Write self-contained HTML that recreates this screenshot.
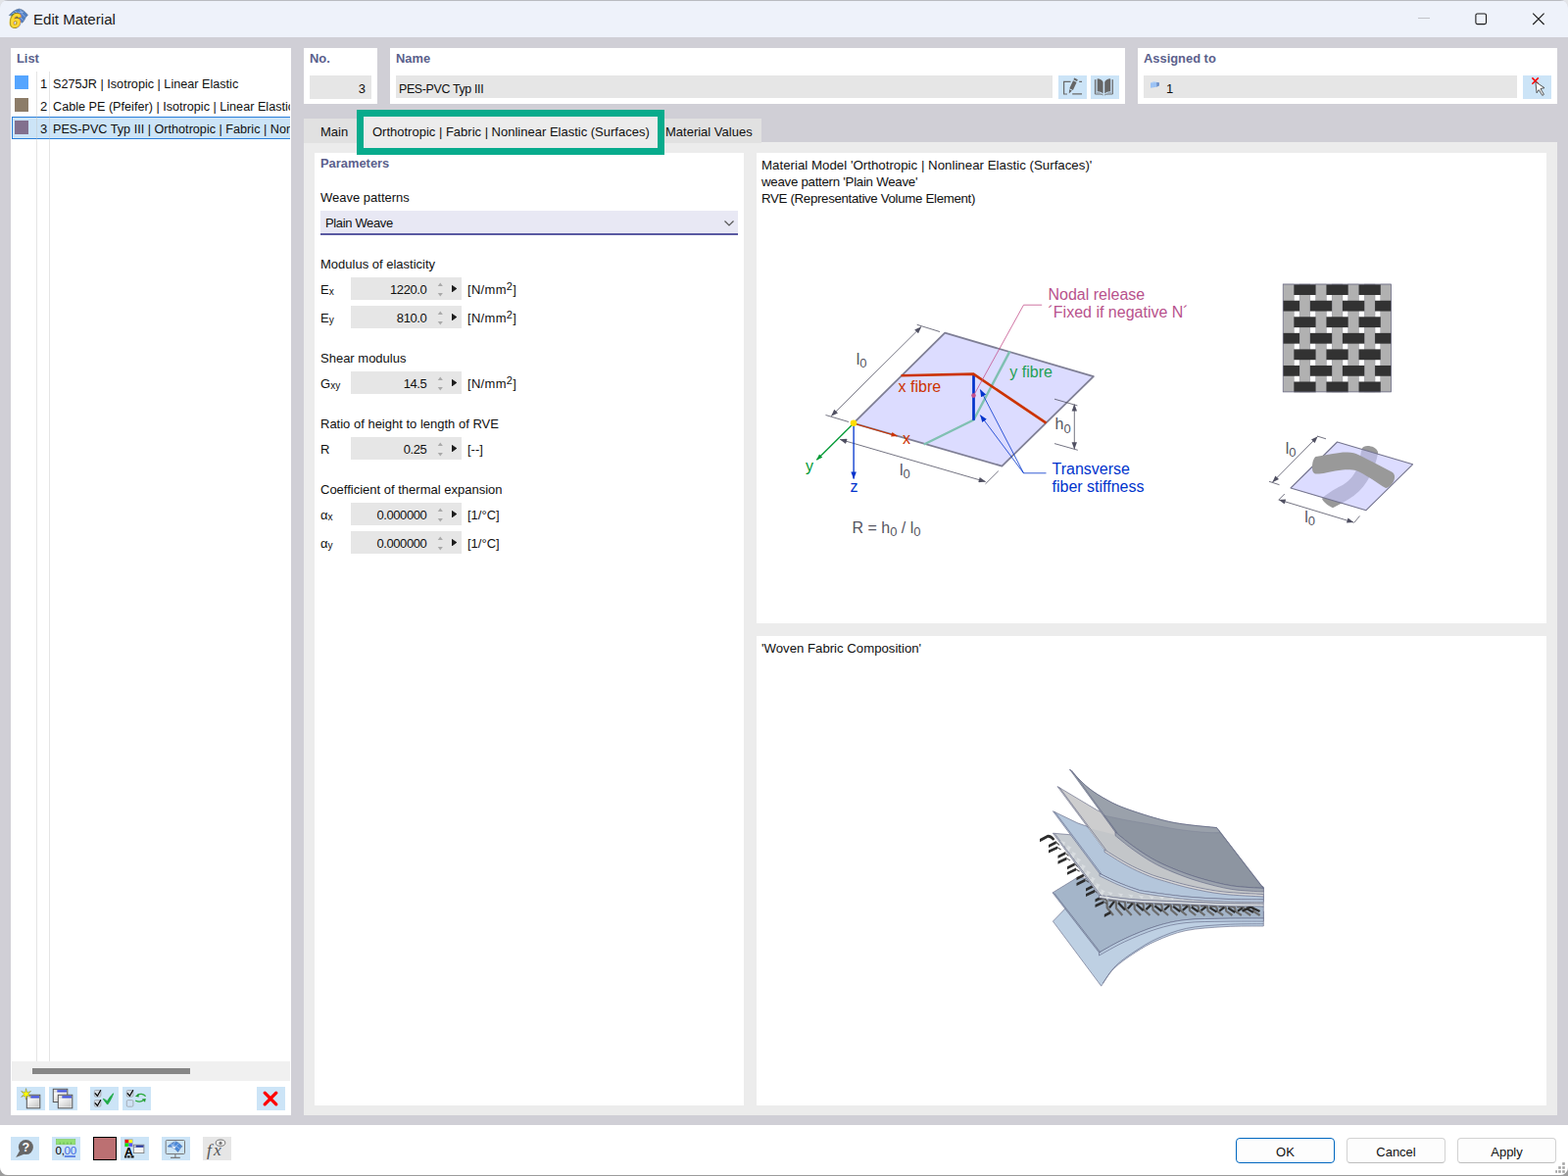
<!DOCTYPE html>
<html lang="en">
<head>
<meta charset="utf-8">
<title>Edit Material</title>
<style>
*{box-sizing:border-box;margin:0;padding:0}
html,body{width:1600px;height:1200px;overflow:hidden;background:linear-gradient(#e2e4e8 0,#e2e4e8 600px,#9c9c9c 600px)}
body{font-family:"Liberation Sans",sans-serif;font-size:13px;color:#111;position:relative}
.abs,.t,.b,.p,.in,.btn{position:absolute}
.t{line-height:16px;white-space:nowrap;font-size:13px;color:#101010}
.b{font-weight:bold;color:#5b5f8c;font-size:12.9px}
#params .t{margin-top:1px}
#params .t.b{margin-top:0}
#params .sp .v{margin-top:1px}
.tab .t{margin-top:1px}
#list .row{font-size:12.65px}
.p{background:#fff}
.in{background:#e6e6e6}
.btn{background:#cce4f7;width:29px;height:24px}
.sub{font-size:10px;position:relative;top:0.6px}
sup{font-size:11px;line-height:0;position:relative;top:1.5px;vertical-align:super}
#win{position:absolute;left:0;top:0;width:1600px;height:1199px;background:#d0cfd6;border-radius:8px;overflow:hidden}
#title{position:absolute;left:0;top:0;width:1600px;height:38px;background:#eef2fa;box-shadow:inset 0 1px 0 #b9bbc0}
#bottom{position:absolute;left:0;top:1148px;width:1600px;height:51px;background:#fff}
.tab{position:absolute;top:121px;height:25px;background:#e1e1e1;z-index:2}
.pb{position:absolute;height:26px;width:101px;border:1px solid #d2d2d2;border-bottom-color:#bdbdbd;border-radius:4px;background:#fdfdfd;text-align:center;line-height:27px;font-size:13px}
.sp{position:absolute;width:113px;height:23px;background:#e6e6e6}
.sp .v{position:absolute;right:35.6px;top:4px;line-height:16px;font-size:13px;letter-spacing:-0.4px}
.sp .u,.sp .d{position:absolute;left:88.4px;width:5.8px;height:4px;background:#a9a9a9}
.sp .u{top:5.4px;clip-path:polygon(50% 0,100% 100%,0 100%)}
.sp .d{top:15.6px;clip-path:polygon(0 0,100% 0,50% 100%)}
.sp .r{position:absolute;left:103px;top:7.7px;width:5.4px;height:7.8px;background:#1e1e1e;clip-path:polygon(0 0,100% 50%,0 100%)}
</style>
</head>
<body>
<svg width="0" height="0" style="position:absolute"><defs><linearGradient id="wg" x1="0" y1="0" x2="1" y2="1"><stop offset="0" stop-color="#fff"/><stop offset="1" stop-color="#c4c4c4"/></linearGradient></defs></svg>
<div id="win">
<!-- TITLE BAR -->
<div id="title">
  <div class="t" style="left:34px;top:11px;font-size:15.1px;line-height:18px;color:#1a1a1a">Edit Material</div>
  <svg class="abs" style="left:6px;top:5px" width="28" height="28" viewBox="6 5 28 28">
<path d="M9.3 15.6 C11.5 13 15 10 19.5 9.1 C22.5 9.4 26 12 28.4 15.4 L26.3 17.4 C25.5 19.5 24.3 21.6 22.8 23.2 L19.5 21.5 L15 16.5 Z" fill="#4f7fc4" stroke="#6a7f9c" stroke-width="0.8"/>
<path d="M12.5 13.8 L24 12.2 M15.5 11.2 L19 16 L23.5 20.5 M20.5 9.8 L22.5 14 L25.8 17.4" stroke="#9bb9e6" stroke-width="0.9" fill="none"/>
<g font-family="'Liberation Sans',sans-serif" font-weight="bold" font-style="italic" font-size="19.5"><text x="10" y="28" fill="#85731c" stroke="#85731c" stroke-width="1.9" stroke-linejoin="round">6</text><text x="10" y="28" fill="#fdd835" stroke="#fdd835" stroke-width="0.5" stroke-linejoin="round">6</text></g>
</svg>
  <svg class="abs" style="left:1440px;top:8px" width="150" height="24" viewBox="1440 8 150 24" fill="none">
<path d="M1447 18.5 H1459" stroke="#c2c4c9" stroke-width="1"/>
<rect x="1505.9" y="14" width="10.6" height="10.6" rx="1.6" stroke="#1b1b1b" stroke-width="1.1"/>
<path d="M1564.2 13.6 L1575.6 25 M1575.6 13.6 L1564.2 25" stroke="#1b1b1b" stroke-width="1.1"/>
</svg>
</div>

<!-- LIST PANEL -->
<div class="p" style="left:11px;top:49px;width:286px;height:1089px;overflow:hidden" id="list">
  <div class="t b" style="left:6px;top:3px">List</div>
  <div class="abs" style="left:0;top:0;width:285px;height:1034px;overflow:hidden"><div class="abs" style="left:1px;top:70px;width:290px;height:23px;background:#cce4f7;border:1px solid #2b7fd9;border-right:none"></div>
  <div class="abs" style="left:26px;top:24px;width:1px;height:1010px;background:rgba(190,190,190,0.4)"></div>
  <div class="abs" style="left:39px;top:24px;width:1px;height:1010px;background:rgba(190,190,190,0.4)"></div>
  <div class="abs" style="left:4px;top:28px;width:14px;height:14px;background:#55a5ff"></div>
  <div class="abs" style="left:4px;top:51px;width:14px;height:14px;background:#8c7c68"></div>
  <div class="abs" style="left:4px;top:74px;width:14px;height:14px;background:#82708e"></div>
  <div class="t" style="left:30px;top:29px">1</div><div class="t row" style="left:43px;top:29px">S275JR | Isotropic | Linear Elastic</div>
  <div class="t" style="left:30px;top:52px">2</div><div class="t row" style="left:43px;top:52px">Cable PE (Pfeifer) | Isotropic | Linear Elastic</div>
  <div class="t" style="left:30px;top:75px">3</div><div class="t row" style="left:43px;top:75px">PES-PVC Typ III | Orthotropic | Fabric | Nonlinear Elastic (Surfaces)</div>
  </div>
  <div class="abs" style="left:1px;top:1034px;width:284px;height:20px;background:#f0f0f0"></div>
  <div class="abs" style="left:22px;top:1041px;width:161px;height:6px;background:#868686"></div>
  <div class="btn" style="left:6px;top:1060px"><svg class="abs" style="left:0;top:0" width="29" height="24" viewBox="0 0 29 24"><rect x="10.3" y="8.3" width="13.5" height="13.5" fill="#e9e9e9" stroke="#555" stroke-width="1"/><rect x="14.3" y="9.200000000000001" width="8.7" height="2.3" fill="#4455dd"/><rect x="11.200000000000001" y="9.200000000000001" width="2.6" height="2.3" fill="#ddd"/><rect x="11.5" y="12.3" width="11.1" height="8.1" fill="url(#wg)"/><path d="M9.6 1.6 L10.6 5.7 L14.6 4.5 L11.6 7.4 L14.6 10.3 L10.6 9.1 L9.6 13.2 L8.6 9.1 L4.6 10.3 L7.6 7.4 L4.6 4.5 L8.6 5.7 Z" fill="#ffff00" stroke="#77774a" stroke-width="0.5"/></svg></div>
  <div class="btn" style="left:39px;top:1060px"><svg class="abs" style="left:0;top:0" width="29" height="24" viewBox="0 0 29 24"><rect x="4.3" y="2.3" width="14.5" height="13.2" fill="#e9e9e9" stroke="#555" stroke-width="1"/><rect x="8.3" y="3.1999999999999997" width="9.7" height="2.3" fill="#4455dd"/><rect x="5.2" y="3.1999999999999997" width="2.6" height="2.3" fill="#ddd"/><rect x="5.5" y="6.3" width="12.1" height="7.799999999999999" fill="url(#wg)"/><rect x="9.3" y="8.3" width="14.5" height="13.5" fill="#e9e9e9" stroke="#555" stroke-width="1"/><rect x="13.3" y="9.200000000000001" width="9.7" height="2.3" fill="#4455dd"/><rect x="10.200000000000001" y="9.200000000000001" width="2.6" height="2.3" fill="#ddd"/><rect x="10.5" y="12.3" width="12.1" height="8.1" fill="url(#wg)"/></svg></div>
  <div class="btn" style="left:81px;top:1060px"><svg class="abs" style="left:0;top:0" width="29" height="24" viewBox="0 0 29 24"><rect x="4.3" y="3.5" width="6.6" height="6.6" rx="1.2" fill="#d3dbe3" stroke="#9a9fa8" stroke-width="0.8"/><rect x="4.3" y="13.6" width="6.6" height="6.6" rx="1.2" fill="#d3dbe3" stroke="#9a9fa8" stroke-width="0.8"/><path d="M4.8 6.4 L7.4 9.2 L10.9 3.2" fill="none" stroke="#000" stroke-width="1.25"/><path d="M4.8 16.4 L7.4 19.2 L10.9 13.2" fill="none" stroke="#000" stroke-width="1.25"/><path d="M13.2 12.2 C14.8 12.6 16.3 13.6 17.4 14.8 C19 12 21 9.2 23.7 6.8 C22.3 10.6 20.3 14.8 17.7 18.1 C16.3 16.4 14.4 14 13.2 12.2 Z" fill="#1faa47" stroke="#1faa47" stroke-width="0.9" stroke-linejoin="round"/></svg></div>
  <div class="btn" style="left:114px;top:1060px"><svg class="abs" style="left:0;top:0" width="29" height="24" viewBox="0 0 29 24"><rect x="4.3" y="3.5" width="6.6" height="6.6" rx="1.2" fill="#d3dbe3" stroke="#9a9fa8" stroke-width="0.8"/><rect x="4.3" y="13.6" width="6.6" height="6.6" rx="1.2" fill="#cfe2f5" stroke="#9a9fa8" stroke-width="0.8"/><path d="M4.8 6.4 L7.4 9.2 L10.9 3.2" fill="none" stroke="#000" stroke-width="1.25"/><path d="M23.6 9.6 C21.5 7 17.5 6.6 15.2 8.4" fill="none" stroke="#2aaa3a" stroke-width="1.3"/><path d="M12.9 9.8 L16.6 6.8 L16.6 10.4 Z" fill="#1f9a30"/>
<path d="M13.2 14 C16 15.4 19.5 15.2 21.6 13.6" fill="none" stroke="#2aaa3a" stroke-width="1.3"/><path d="M23.8 12 L23 15.8 L19.8 12.6 Z" fill="#1f9a30"/></svg></div>
  <div class="btn" style="left:251px;top:1060px"><svg class="abs" style="left:0;top:0" width="29" height="24" viewBox="0 0 29 24"><path d="M8.2 6.2 L19.8 17.8 M19.8 6.2 L8.2 17.8" stroke="#f00" stroke-width="3.3" stroke-linecap="round"/></svg></div>
</div>

<!-- TOP PANELS -->
<div class="p" style="left:310px;top:49px;width:75px;height:57px">
  <div class="t b" style="left:6px;top:3px">No.</div>
  <div class="in" style="left:6px;top:28px;width:63px;height:24px"><div class="t" style="right:6px;top:6px">3</div></div>
</div>
<div class="p" style="left:398px;top:49px;width:750px;height:57px">
  <div class="t b" style="left:6px;top:3px">Name</div>
  <div class="in" style="left:6px;top:28px;width:670px;height:23px"><div class="t" style="left:3px;top:6px;font-size:12.4px;letter-spacing:-0.34px">PES-PVC Typ III</div></div>
  <div class="btn" style="left:682px;top:28px"><svg class="abs" style="left:0;top:0" width="29" height="24" viewBox="0 0 29 24">
<path d="M12.5 6.4 H5.6 V19 H9" fill="none" stroke="#6a6a6a" stroke-width="1.2"/>
<path d="M14.2 18.8 H24 M21.2 6.3 H24" fill="none" stroke="#6a6a6a" stroke-width="1.3"/>
<path d="M16.2 2.6 L19.8 4.3 L19 6 L15.4 4.3 Z M15 5.2 L18.6 6.9 L14.9 14.9 L11.3 13.2 Z M11.1 14.2 L13.9 15.5 L10.8 18.6 Z" fill="#666"/>
</svg></div>
  <div class="btn" style="left:715px;top:28px"><svg class="abs" style="left:0;top:0" width="29" height="24" viewBox="0 0 29 24">
<path d="M6.7 3.2 C9.5 3.2 11.6 4.6 12.6 6.8 V18.6 C11 17 9 16.3 6.7 16.3 Z M20.1 3.2 C17.3 3.2 15.2 4.6 14.2 6.8 V18.6 C15.8 17 17.8 16.3 20.1 16.3 Z" fill="#666"/>
<path d="M4.4 4.2 V19 H9.8 C11 19 12 19.4 12.6 20 M22.4 4.2 V19 H17 C15.8 19 14.8 19.4 14.2 20" fill="none" stroke="#6a6a6a" stroke-width="1"/>
<path d="M5.6 4 V17.6 H9.5 M21.2 4 V17.6 H17.3" fill="none" stroke="#8d97a3" stroke-width="0.7"/>
</svg></div>
</div>
<div class="p" style="left:1161px;top:49px;width:428px;height:57px">
  <div class="t b" style="left:6px;top:3px">Assigned to</div>
  <div class="in" style="left:6px;top:28px;width:381px;height:23px"><svg class="abs" style="left:6px;top:5px" width="12" height="9" viewBox="6 5 12 9">
<path d="M7 7.4 L10.2 6.1 L15.9 7.2 L13.2 7.2 Z" fill="#bcd6f7"/>
<path d="M7 7.4 L13.2 7.1 L13.2 11.8 L7 12.7 Z" fill="#9cc3f5"/>
<path d="M13.2 7.1 L15.9 7.2 L15.9 10.6 L13.2 11.8 Z" fill="#6b8fc9"/>
</svg><div class="t" style="left:23px;top:6px">1</div></div>
  <div class="btn" style="left:393px;top:28px"><svg class="abs" style="left:0;top:0" width="29" height="24" viewBox="0 0 29 24">
<path d="M9.4 2.4 L15.8 8.8 M15.8 2.4 L9.4 8.8" stroke="#f00" stroke-width="1.5"/>
<path d="M12.9 6.6 L22 12.7 L18 13.5 L21.4 19.4 L19.8 20.4 L16.3 14.6 L14.1 17.8 Z" fill="#fff" stroke="#444" stroke-width="0.9" stroke-linejoin="round"/>
</svg></div>
</div>

<!-- TABS -->
<div class="tab" style="left:310px;width:61px"><div class="t" style="left:17px;top:5px">Main</div></div>
<div class="tab" style="left:671px;width:106px"><div class="t" style="left:8px;top:5px">Material Values</div></div>
<div class="abs" style="left:310px;top:145px;width:1279px;height:993px;background:#ececec"></div>
<div class="abs" style="left:364px;top:112px;width:314px;height:46px;background:#ececec;border:7px solid #07ab8c;z-index:5"><div class="t" style="left:9px;top:8px">Orthotropic | Fabric | Nonlinear Elastic (Surfaces)</div></div>

<!-- PARAMETERS PANEL -->
<div class="p" style="left:321px;top:156px;width:438px;height:972px" id="params">
  <div class="t b" style="left:6px;top:3px">Parameters</div>
  <div class="t" style="left:6px;top:37px">Weave patterns</div>
  <div class="abs" style="left:6px;top:59px;width:426px;height:25px;background:#e8e8f4;border-bottom:2px solid #5a5aa2"><div class="t" style="left:5px;top:4px;letter-spacing:-0.35px">Plain Weave</div>
    <svg class="abs" style="left:410px;top:8px" width="14" height="10" viewBox="0 0 14 10"><path d="M2.5 2.5 L7 7 L11.5 2.5" fill="none" stroke="#555" stroke-width="1.2"/></svg></div>
  <div class="t" style="left:6px;top:105px">Modulus of elasticity</div>
  <div class="t" style="left:6px;top:131px">E<span class="sub">x</span></div><div class="sp" style="left:37px;top:127px"><div class="v">1220.0</div><div class="u"></div><div class="d"></div><div class="r"></div></div><div class="t" style="left:156px;top:131px"><span style="letter-spacing:0.3px">[N/mm<sup>2</sup>]</span></div>
  <div class="t" style="left:6px;top:160px">E<span class="sub">y</span></div><div class="sp" style="left:37px;top:156px"><div class="v">810.0</div><div class="u"></div><div class="d"></div><div class="r"></div></div><div class="t" style="left:156px;top:160px"><span style="letter-spacing:0.3px">[N/mm<sup>2</sup>]</span></div>
  <div class="t" style="left:6px;top:201px">Shear modulus</div>
  <div class="t" style="left:6px;top:227px">G<span class="sub">xy</span></div><div class="sp" style="left:37px;top:223px"><div class="v">14.5</div><div class="u"></div><div class="d"></div><div class="r"></div></div><div class="t" style="left:156px;top:227px"><span style="letter-spacing:0.3px">[N/mm<sup>2</sup>]</span></div>
  <div class="t" style="left:6px;top:268px">Ratio of height to length of RVE</div>
  <div class="t" style="left:6px;top:294px">R</div><div class="sp" style="left:37px;top:290px"><div class="v">0.25</div><div class="u"></div><div class="d"></div><div class="r"></div></div><div class="t" style="left:156px;top:294px">[--]</div>
  <div class="t" style="left:6px;top:335px">Coefficient of thermal expansion</div>
  <div class="t" style="left:6px;top:361px">α<span class="sub">x</span></div><div class="sp" style="left:37px;top:357px"><div class="v">0.000000</div><div class="u"></div><div class="d"></div><div class="r"></div></div><div class="t" style="left:156px;top:361px">[1/°C]</div>
  <div class="t" style="left:6px;top:390px">α<span class="sub">y</span></div><div class="sp" style="left:37px;top:386px"><div class="v">0.000000</div><div class="u"></div><div class="d"></div><div class="r"></div></div><div class="t" style="left:156px;top:390px">[1/°C]</div>
</div>

<!-- RIGHT TOP PANEL -->
<div class="p" style="left:772px;top:156px;width:806px;height:480px" id="rt">
  <div class="t" style="left:5px;top:4px;line-height:17px;font-size:13.3px">Material Model 'Orthotropic | Nonlinear Elastic (Surfaces)'<br><span style="letter-spacing:-0.28px">weave pattern 'Plain Weave'</span><br><span style="letter-spacing:-0.33px">RVE (Representative Volume Element)</span></div>
<!--DIAGRAM-START--><svg class="abs" style="left:0;top:0" width="806" height="480" viewBox="772 156 806 480" font-family="'Liberation Sans',sans-serif" font-size="16">
<defs>
<marker id="ag" viewBox="0 0 10 8" refX="9.5" refY="4" markerWidth="7.8" markerHeight="5.8" markerUnits="userSpaceOnUse" orient="auto-start-reverse"><path d="M0 0.3 L10 4 L0 7.7 Z" fill="#505062"/></marker>
<marker id="ab" viewBox="0 0 10 8" refX="9.5" refY="4" markerWidth="8" markerHeight="6" markerUnits="userSpaceOnUse" orient="auto"><path d="M0 0.3 L10 4 L0 7.7 Z" fill="#0033cc"/></marker>
<marker id="ar" viewBox="0 0 10 8" refX="9.5" refY="4" markerWidth="9" markerHeight="5" markerUnits="userSpaceOnUse" orient="auto"><path d="M0 0.3 L10 4 L0 7.7 Z" fill="#cc3300"/></marker>
<marker id="agr" viewBox="0 0 10 8" refX="9.5" refY="4" markerWidth="9" markerHeight="5" markerUnits="userSpaceOnUse" orient="auto"><path d="M0 0.3 L10 4 L0 7.7 Z" fill="#009933"/></marker>
<marker id="ag2" viewBox="0 0 10 8" refX="9.5" refY="4" markerWidth="7.5" markerHeight="5.5" markerUnits="userSpaceOnUse" orient="auto-start-reverse"><path d="M0 0.2 L10 4 L0 7.8 Z" fill="#505062"/></marker>
</defs>
<!-- main RVE plane -->
<path d="M870.9 431.8 L964.2 339.7 L1115.8 384.2 L1022.4 475.6 Z" fill="#dcdcff" stroke="#7f7f95" stroke-width="1.8" stroke-linejoin="round"/>
<!-- y fibre -->
<path d="M1030.4 358.6 L993.5 428.5 L942.8 453.5" fill="none" stroke="#80c0b2" stroke-width="2.4" stroke-linejoin="round"/>
<!-- vertical -->
<path d="M993.5 382 L993.5 428.8" stroke="#0033cc" stroke-width="2.7" fill="none"/>
<!-- x fibre -->
<path d="M919.6 383.2 L993.3 381.6 L1067.5 431.6" fill="none" stroke="#cc3300" stroke-width="2.6" stroke-linejoin="miter"/>
<!-- pink -->
<path d="M993.5 403.6 L1044.5 311.2 L1063.2 311.2" fill="none" stroke="#c4508c" stroke-width="0.8"/>
<circle cx="993.5" cy="403.6" r="2.3" fill="#c4508c"/>
<!-- dims -->
<g stroke="#505062" stroke-width="0.8" fill="none">
<path d="M935.7 331.3 L959 338.5 M842.5 423.5 L866 430.5"/>
<path d="M848.3 424.5 L940 333.5" marker-start="url(#ag)" marker-end="url(#ag)"/>
<path d="M1018.8 480.6 L1005.5 493.8"/>
<path d="M857.2 448.4 L1005.6 491.5" marker-start="url(#ag)" marker-end="url(#ag)"/>
<path d="M1076 407.2 L1099.4 413.9 M1076 452.6 L1099.8 459.3"/>
<path d="M1096.3 412.6 L1096.3 458.2" marker-start="url(#ag)" marker-end="url(#ag)"/>
</g>
<!-- blue leaders -->
<g stroke="#0033cc" stroke-width="0.8" fill="none">
<path d="M1067.5 482.8 L1044.5 482.8 L1000.3 397.6" marker-end="url(#ab)"/>
<path d="M1044.5 482.8 L1000.3 423.6" marker-end="url(#ab)"/>
</g>
<!-- axes -->
<path d="M871 432 L915.5 445" stroke="#cc3300" stroke-width="1.3" marker-end="url(#ar)"/>
<path d="M871 432 L833.4 469.2" stroke="#009933" stroke-width="1.3" marker-end="url(#agr)"/>
<path d="M871.1 432 L871.1 488.6" stroke="#0033cc" stroke-width="1.3" marker-end="url(#ab)"/>
<circle cx="871" cy="431.8" r="3.3" fill="#ffdd00"/>
<!-- texts -->
<g fill="#b8528c"><text x="1069.5" y="305.9">Nodal release</text><text x="1069.5" y="324">´Fixed if negative N´</text></g>
<text x="916.6" y="400.0" fill="#cc3300">x fibre</text>
<text x="1030.3" y="385.0" fill="#1fa055">y fibre</text>
<text x="921" y="452.7" fill="#cc3300">x</text>
<text x="822" y="481.4" fill="#009933">y</text>
<text x="867.4" y="502.4" fill="#0033cc">z</text>
<g fill="#0033cc"><text x="1073.5" y="484.1">Transverse</text><text x="1073.5" y="501.9">fiber stiffness</text></g>
<g fill="#55555f">
<text x="873.8" y="371.7">l<tspan font-size="13" dy="3.5">0</tspan></text>
<text x="918" y="484.6">l<tspan font-size="13" dy="3.5">0</tspan></text>
<text x="1076.5" y="438.4">h<tspan font-size="13" dy="3.5">0</tspan></text>
<text x="869.5" y="543.7">R = h<tspan font-size="13" dy="3.5">0</tspan><tspan dy="-3.5"> / l</tspan><tspan font-size="13" dy="3.5">0</tspan></text>
</g>
<g id="weave"><rect x="1309.2" y="290.0" width="110.4" height="109.9" fill="#fff"/>
<rect x="1309.50" y="290.0" width="10.8" height="109.9" fill="#b1b1b1" stroke="#8a8a94" stroke-width="0.4"/>
<rect x="1326.05" y="290.0" width="10.8" height="109.9" fill="#b1b1b1" stroke="#8a8a94" stroke-width="0.4"/>
<rect x="1342.60" y="290.0" width="10.8" height="109.9" fill="#b1b1b1" stroke="#8a8a94" stroke-width="0.4"/>
<rect x="1359.15" y="290.0" width="10.8" height="109.9" fill="#b1b1b1" stroke="#8a8a94" stroke-width="0.4"/>
<rect x="1375.70" y="290.0" width="10.8" height="109.9" fill="#b1b1b1" stroke="#8a8a94" stroke-width="0.4"/>
<rect x="1392.25" y="290.0" width="10.8" height="109.9" fill="#b1b1b1" stroke="#8a8a94" stroke-width="0.4"/>
<rect x="1408.80" y="290.0" width="10.8" height="109.9" fill="#b1b1b1" stroke="#8a8a94" stroke-width="0.4"/>
<rect x="1320.30" y="290.20" width="22.30" height="10.8" fill="#323232"/>
<rect x="1353.40" y="290.20" width="22.30" height="10.8" fill="#323232"/>
<rect x="1386.50" y="290.20" width="22.30" height="10.8" fill="#323232"/>
<rect x="1309.20" y="306.75" width="16.85" height="10.8" fill="#323232"/>
<rect x="1336.85" y="306.75" width="22.30" height="10.8" fill="#323232"/>
<rect x="1369.95" y="306.75" width="22.30" height="10.8" fill="#323232"/>
<rect x="1403.05" y="306.75" width="16.55" height="10.8" fill="#323232"/>
<rect x="1320.30" y="323.30" width="22.30" height="10.8" fill="#323232"/>
<rect x="1353.40" y="323.30" width="22.30" height="10.8" fill="#323232"/>
<rect x="1386.50" y="323.30" width="22.30" height="10.8" fill="#323232"/>
<rect x="1309.20" y="339.85" width="16.85" height="10.8" fill="#323232"/>
<rect x="1336.85" y="339.85" width="22.30" height="10.8" fill="#323232"/>
<rect x="1369.95" y="339.85" width="22.30" height="10.8" fill="#323232"/>
<rect x="1403.05" y="339.85" width="16.55" height="10.8" fill="#323232"/>
<rect x="1320.30" y="356.40" width="22.30" height="10.8" fill="#323232"/>
<rect x="1353.40" y="356.40" width="22.30" height="10.8" fill="#323232"/>
<rect x="1386.50" y="356.40" width="22.30" height="10.8" fill="#323232"/>
<rect x="1309.20" y="372.95" width="16.85" height="10.8" fill="#323232"/>
<rect x="1336.85" y="372.95" width="22.30" height="10.8" fill="#323232"/>
<rect x="1369.95" y="372.95" width="22.30" height="10.8" fill="#323232"/>
<rect x="1403.05" y="372.95" width="16.55" height="10.8" fill="#323232"/>
<rect x="1320.30" y="389.50" width="22.30" height="10.8" fill="#323232"/>
<rect x="1353.40" y="389.50" width="22.30" height="10.8" fill="#323232"/>
<rect x="1386.50" y="389.50" width="22.30" height="10.8" fill="#323232"/>
<rect x="1309.2" y="290.0" width="110.4" height="109.9" fill="none" stroke="#6c6c86" stroke-width="0.7"/></g>
<g id="rve2">
<path d="M1390 457.5 C1391 453.5 1404 454 1406.2 461.5 C1405 470 1401 481 1395 491 C1389 501 1380 508 1368 514 L1360 518.3 C1355 516 1350.5 512 1349 509 C1352 505 1360 500 1370 495 C1378 490 1383 483 1385 477 C1388 470 1388 463 1390 457 Z" fill="#999"/>
<path d="M1317 498 L1364.5 451 L1441.5 473.8 L1394 520.7 Z" fill="rgba(201,201,255,0.647)" stroke="#74748e" stroke-width="1.1" stroke-linejoin="round"/>
<path d="M1342.5 466 C1349 465 1354 464 1360 463 C1366 462 1370 461.3 1375 461.5 C1380 461.8 1383 462.5 1386 464 C1391 466.3 1395 468.5 1400 471 L1421 482 C1423.5 484 1423.5 487 1422.5 490 C1421 494 1418 497.5 1414 498 C1410 496 1405 492 1400 489 C1395 486 1392 484 1388 482 C1385 480.5 1383 479.7 1380 479.5 C1377 479.2 1373 479.2 1370 479.5 C1365 480 1360 481 1355 482 C1352 482.7 1349 483.2 1346 483.5 C1344 483.7 1342 483.6 1341 483 C1339.3 481.5 1339 479.5 1339 477 C1339 472.5 1340 468 1342.5 466 Z" fill="#999"/>
<g stroke="#505062" stroke-width="0.8" fill="none">
<path d="M1344 445 L1353 447.8 M1295 491.3 L1305.5 494.7"/>
<path d="M1298.6 491.9 L1344.4 445.6" marker-start="url(#ag2)" marker-end="url(#ag2)"/>
<path d="M1304.5 510.3 L1310.8 504 M1381.5 533.6 L1387.5 526.5"/>
<path d="M1305.2 510 L1381 533" marker-start="url(#ag2)" marker-end="url(#ag2)"/>
</g>
<g fill="#55555f">
<text x="1311.8" y="463.2">l<tspan font-size="13" dy="3">0</tspan></text>
<text x="1331.3" y="533.2">l<tspan font-size="13" dy="3">0</tspan></text>
</g>
</g>
</svg>
<!--DIAGRAM-END-->
</div>

<!-- RIGHT BOTTOM PANEL -->
<div class="p" style="left:772px;top:649px;width:806px;height:479px" id="rb">
  <div class="t" style="left:5px;top:5px;font-size:13.2px">'Woven Fabric Composition'</div>
<!--FABRIC-START--><svg class="abs" style="left:0;top:0" width="806" height="479" viewBox="772 649 806 479">
<g stroke="#5c6180" stroke-width="0.6" stroke-linejoin="round">
<path d="M1074.4 940.1 L1092 922 L1289.3 930 L1289.3 945 C1282.8 945.1 1263.2 944.8 1250.0 945.6 C1236.8 946.4 1221.7 947.2 1210.0 949.6 C1198.3 952.0 1188.6 956.3 1180.0 960.0 C1171.4 963.7 1165.5 967.3 1158.3 972.0 C1151.1 976.7 1142.5 982.6 1136.7 988.3 C1130.9 994.0 1125.9 1003.2 1123.7 1006.2 Z" fill="#bed0e3"/>
<path d="M1125.5 1003.0 C1127.7 1000.1 1132.8 991.1 1138.5 985.5 C1144.2 979.9 1152.9 974.1 1160.0 969.5 C1167.1 964.9 1172.6 961.3 1181.0 957.6 C1189.4 953.9 1199.0 949.8 1210.5 947.4 C1222.0 945.0 1236.9 944.2 1250.0 943.4 C1263.1 942.6 1282.8 942.8 1289.3 942.7" fill="none"/>
<path d="M1074.0 910.9 L1100 895 L1289.3 925 L1289.3 937.1 C1282.8 937.1 1263.2 937.0 1250.0 937.2 C1236.8 937.5 1221.7 937.3 1210.0 938.6 C1198.3 939.9 1190.4 941.8 1180.0 945.0 C1169.6 948.2 1157.2 953.5 1147.5 958.0 C1137.8 962.5 1125.8 969.7 1121.5 972.0 Z" fill="#a4b5c9"/>
<path d="M1121.5 972.0 C1125.8 969.7 1137.8 962.5 1147.5 958.0 C1157.2 953.5 1169.6 948.2 1180.0 945.0 C1190.4 941.8 1198.3 939.9 1210.0 938.6 C1221.7 937.3 1236.8 937.5 1250.0 937.2 C1263.2 937.0 1282.8 937.1 1289.3 937.1 L1289.3 940.1 C1282.8 940.1 1263.2 940.0 1250.0 940.2 C1236.8 940.5 1221.7 940.3 1210.0 941.6 C1198.3 942.9 1190.4 944.8 1180.0 948.0 C1169.6 951.2 1157.2 956.5 1147.5 961.0 C1137.8 965.5 1125.8 972.7 1121.5 975.0 Z" fill="#b9cbdf"/>
<path d="M1075.7 911.3 L1123.2 972.3" fill="none" stroke-width="0.6"/>
</g>
<g fill="none" stroke-linecap="butt" stroke-linejoin="round">
<path d="M1122.0 917.5 L1127.0 917.5 Q1129.5 917.7 1129.5 919.9 L1129.7 926.3 L1136.0 934.0" stroke="#6b6b6b" stroke-width="2.2"/>
<path d="M1131.3 918.6 L1136.3 918.6 Q1138.8 918.8 1138.8 921.0 L1139.0 926.8 L1145.3 934.0" stroke="#6b6b6b" stroke-width="2.2"/>
<path d="M1140.7 919.7 L1145.7 919.7 Q1148.2 919.9 1148.2 922.1 L1148.4 927.3 L1154.7 934.0" stroke="#6b6b6b" stroke-width="2.2"/>
<path d="M1150.0 920.8 L1155.0 920.8 Q1157.5 921.0 1157.5 923.2 L1157.8 927.8 L1164.0 934.0" stroke="#6b6b6b" stroke-width="2.2"/>
<path d="M1159.4 921.7 L1164.4 921.7 Q1166.9 921.9 1166.9 924.1 L1167.1 928.2 L1173.4 934.0" stroke="#6b6b6b" stroke-width="2.2"/>
<path d="M1168.8 922.1 L1173.8 922.1 Q1176.2 922.3 1176.2 924.5 L1176.5 928.4 L1182.8 934.0" stroke="#6b6b6b" stroke-width="2.2"/>
<path d="M1178.1 922.4 L1183.1 922.4 Q1185.6 922.6 1185.6 924.8 L1185.8 928.5 L1192.1 934.0" stroke="#6b6b6b" stroke-width="2.2"/>
<path d="M1187.5 922.8 L1192.5 922.8 Q1195.0 923.0 1195.0 925.2 L1195.2 928.7 L1201.5 934.0" stroke="#6b6b6b" stroke-width="2.2"/>
<path d="M1196.8 923.2 L1201.8 923.2 Q1204.3 923.4 1204.3 925.6 L1204.5 928.9 L1210.8 934.0" stroke="#6b6b6b" stroke-width="2.2"/>
<path d="M1206.2 923.6 L1211.2 923.6 Q1213.7 923.8 1213.7 926.0 L1213.9 929.1 L1220.2 934.0" stroke="#6b6b6b" stroke-width="2.2"/>
<path d="M1215.5 924.0 L1220.5 924.0 Q1223.0 924.2 1223.0 926.4 L1223.2 929.2 L1229.5 934.0" stroke="#6b6b6b" stroke-width="2.2"/>
<path d="M1224.8 924.4 L1229.8 924.4 Q1232.3 924.6 1232.3 926.8 L1232.5 929.4 L1238.8 934.0" stroke="#6b6b6b" stroke-width="2.2"/>
<path d="M1234.2 924.8 L1239.2 924.8 Q1241.7 925.0 1241.7 927.2 L1241.9 929.6 L1248.2 934.0" stroke="#6b6b6b" stroke-width="2.2"/>
<path d="M1243.5 925.1 L1248.5 925.1 Q1251.0 925.3 1251.0 927.5 L1251.2 929.7 L1257.5 934.0" stroke="#6b6b6b" stroke-width="2.2"/>
<path d="M1252.9 925.4 L1257.9 925.4 Q1260.4 925.6 1260.4 927.8 L1260.6 929.8 L1266.9 934.0" stroke="#6b6b6b" stroke-width="2.2"/>
<path d="M1262.2 925.5 L1267.2 925.5 Q1269.8 925.7 1269.8 927.9 L1270.0 929.9 L1276.2 934.0" stroke="#6b6b6b" stroke-width="2.2"/>
<path d="M1271.6 925.6 L1276.6 925.6 Q1279.1 925.8 1279.1 928.0 L1279.3 930.0 L1285.6 934.0" stroke="#6b6b6b" stroke-width="2.2"/>
<path d="M1132.0 926.3 L1137.0 919.9" stroke="#2b2b2b" stroke-width="2.3"/>
<path d="M1141.0 921.1 L1148.0 928.5" stroke="#2b2b2b" stroke-width="2.3"/>
<path d="M1150.7 927.3 L1155.7 921.8" stroke="#2b2b2b" stroke-width="2.3"/>
<path d="M1159.7 922.8 L1166.7 929.2" stroke="#2b2b2b" stroke-width="2.3"/>
<path d="M1169.4 928.2 L1174.4 923.4" stroke="#2b2b2b" stroke-width="2.3"/>
<path d="M1178.4 924.3 L1185.4 929.9" stroke="#2b2b2b" stroke-width="2.3"/>
<path d="M1188.1 928.5 L1193.1 924.0" stroke="#2b2b2b" stroke-width="2.3"/>
<path d="M1197.1 924.9 L1204.1 930.1" stroke="#2b2b2b" stroke-width="2.3"/>
<path d="M1206.8 928.9 L1211.8 924.7" stroke="#2b2b2b" stroke-width="2.3"/>
<path d="M1215.8 925.5 L1222.8 930.4" stroke="#2b2b2b" stroke-width="2.3"/>
<path d="M1225.5 929.2 L1230.5 925.3" stroke="#2b2b2b" stroke-width="2.3"/>
<path d="M1234.5 926.1 L1241.5 930.6" stroke="#2b2b2b" stroke-width="2.3"/>
<path d="M1244.2 929.6 L1249.2 925.9" stroke="#2b2b2b" stroke-width="2.3"/>
<path d="M1253.2 926.6 L1260.2 930.9" stroke="#2b2b2b" stroke-width="2.3"/>
<path d="M1262.9 929.8 L1267.9 926.4" stroke="#2b2b2b" stroke-width="2.3"/>
<path d="M1271.9 927.1 L1278.9 931.0" stroke="#2b2b2b" stroke-width="2.3"/>
<path d="M1267.5 929.8 L1276 925.5 L1285.5 930" stroke="#2b2b2b" stroke-width="2.4"/>
</g><g fill="#2d2d2d" stroke="none">
<path d="M1061 856 L1068.6 851.9 Q1072.5 851.2 1076.4 856.2 L1074.6 857.8 Q1071.8 854.6 1069.4 854.8 L1061 859.2 Z"/>
<path d="M1070.0 862.0 L1077.8 858.0 L1077.8 861.0 L1070.0 865.0 Z"/>
<path d="M1070.0 867.6 L1079.0 863.4 L1079.0 866.3 L1070.0 870.6 Z"/>
<path d="M1079.5 873.1 L1087.3 869.1 L1087.3 872.1 L1079.5 876.1 Z"/>
<path d="M1079.5 878.8 L1088.5 874.5 L1088.5 877.4 L1079.5 881.7 Z"/>
<path d="M1089.0 884.2 L1096.8 880.2 L1096.8 883.2 L1089.0 887.2 Z"/>
<path d="M1089.0 889.9 L1098.0 885.6 L1098.0 888.5 L1089.0 892.8 Z"/>
<path d="M1098.5 895.3 L1106.3 891.3 L1106.3 894.2 L1098.5 898.2 Z"/>
<path d="M1098.5 900.9 L1107.5 896.6 L1107.5 899.6 L1098.5 903.9 Z"/>
<path d="M1108.0 906.4 L1115.8 902.4 L1115.8 905.4 L1108.0 909.4 Z"/>
<path d="M1108.0 912.0 L1117.0 907.8 L1117.0 910.7 L1108.0 915.0 Z"/>
<path d="M1117.5 917.5 L1125.3 913.5 L1125.3 916.5 L1117.5 920.5 Z"/>
<path d="M1117.5 923.1 L1126.5 918.9 L1126.5 921.8 L1117.5 926.1 Z"/>
<path d="M1126.8 933.1 L1133.3 929.5 L1133.3 932.5 L1126.8 936.1 Z"/>
</g>
<g stroke="#555" stroke-width="1.1" fill="none">
<path d="M1077.8 859.5 l3.2 2.8 M1079.0 864.8 l3.6 2.2"/>
<path d="M1087.3 870.6 l3.2 2.8 M1088.5 875.9 l3.6 2.2"/>
<path d="M1096.8 881.7 l3.2 2.8 M1098.0 887.0 l3.6 2.2"/>
<path d="M1106.3 892.8 l3.2 2.8 M1107.5 898.1 l3.6 2.2"/>
<path d="M1115.8 903.9 l3.2 2.8 M1117.0 909.2 l3.6 2.2"/>
<path d="M1125.3 915.0 l3.2 2.8 M1126.5 920.3 l3.6 2.2"/>
</g>
<g stroke="#5c6180" stroke-width="0.6" stroke-linejoin="round">
<path d="M1074.4 850.2 L1095 852 L1289.3 915 L1289.3 922.3 C1282.8 922.2 1263.2 922.1 1250.0 921.8 C1236.8 921.4 1225.3 920.8 1210.0 920.2 C1194.7 919.6 1173.0 919.1 1158.3 918.0 C1143.5 916.9 1127.6 914.3 1121.5 913.6 Z" fill="#c7ccd1"/>
<path d="M1121.5 913.6 C1127.6 914.3 1143.5 916.9 1158.3 918.0 C1173.0 919.1 1194.7 919.6 1210.0 920.2 C1225.3 920.8 1236.8 921.4 1250.0 921.8 C1263.2 922.1 1282.8 922.2 1289.3 922.3 L1289.3 924.9 C1282.8 924.8 1263.2 924.8 1250.0 924.4 C1236.8 924.0 1225.3 923.4 1210.0 922.8 C1194.7 922.2 1173.0 921.7 1158.3 920.6 C1143.5 919.5 1127.6 916.9 1121.5 916.2 Z" fill="#d9dde0"/>
<path d="M1076.2 850.5 L1123.3 913.9" fill="none" stroke-width="0.6"/>
</g>
<g fill="#dfe3e6" opacity="0.75">
<path d="M1082.0 858.0 l5 1.2 l-1.2 4 Z"/>
<path d="M1089.0 862.5 l4.5 2.2 l-3.4 2.4 Z"/>
<path d="M1086.9 864.4 l5 1.2 l-1.2 4 Z"/>
<path d="M1093.9 868.9 l4.5 2.2 l-3.4 2.4 Z"/>
<path d="M1091.8 870.8 l5 1.2 l-1.2 4 Z"/>
<path d="M1098.8 875.3 l4.5 2.2 l-3.4 2.4 Z"/>
<path d="M1096.7 877.2 l5 1.2 l-1.2 4 Z"/>
<path d="M1103.7 881.7 l4.5 2.2 l-3.4 2.4 Z"/>
<path d="M1101.6 883.6 l5 1.2 l-1.2 4 Z"/>
<path d="M1108.6 888.1 l4.5 2.2 l-3.4 2.4 Z"/>
<path d="M1106.5 890.0 l5 1.2 l-1.2 4 Z"/>
<path d="M1113.5 894.5 l4.5 2.2 l-3.4 2.4 Z"/>
<path d="M1111.4 896.4 l5 1.2 l-1.2 4 Z"/>
<path d="M1118.4 900.9 l4.5 2.2 l-3.4 2.4 Z"/>
<path d="M1116.3 902.8 l5 1.2 l-1.2 4 Z"/>
<path d="M1123.3 907.3 l4.5 2.2 l-3.4 2.4 Z"/>
<path d="M1121.2 909.2 l5 1.2 l-1.2 4 Z"/>
<path d="M1128.2 913.7 l4.5 2.2 l-3.4 2.4 Z"/>
<path d="M1130.0 910.1 l5.5 0.8 l-2 2.8 Z"/>
<path d="M1140.5 911.4 l5.5 0.8 l-2 2.8 Z"/>
<path d="M1151.0 912.6 l5.5 0.8 l-2 2.8 Z"/>
<path d="M1161.5 913.6 l5.5 0.8 l-2 2.8 Z"/>
<path d="M1172.0 914.1 l5.5 0.8 l-2 2.8 Z"/>
<path d="M1182.5 914.5 l5.5 0.8 l-2 2.8 Z"/>
<path d="M1193.0 915.0 l5.5 0.8 l-2 2.8 Z"/>
<path d="M1203.5 915.4 l5.5 0.8 l-2 2.8 Z"/>
<path d="M1214.0 915.9 l5.5 0.8 l-2 2.8 Z"/>
<path d="M1224.5 916.3 l5.5 0.8 l-2 2.8 Z"/>
<path d="M1235.0 916.7 l5.5 0.8 l-2 2.8 Z"/>
<path d="M1245.5 917.1 l5.5 0.8 l-2 2.8 Z"/>
<path d="M1256.0 917.4 l5.5 0.8 l-2 2.8 Z"/>
<path d="M1266.5 917.5 l5.5 0.8 l-2 2.8 Z"/>
<path d="M1277.0 917.6 l5.5 0.8 l-2 2.8 Z"/>
</g>
<g stroke="#5c6180" stroke-width="0.6" stroke-linejoin="round">
<path d="M1074.4 827.7 L1100 840 L1289.3 905 L1289.3 918 C1282.8 917.9 1263.2 917.9 1250.0 917.4 C1236.8 916.9 1223.3 916.3 1210.0 915.0 C1196.7 913.7 1178.6 911.1 1170.0 909.8 C1161.4 908.5 1163.3 908.6 1158.3 907.0 C1153.3 905.4 1146.0 902.6 1140.0 900.0 C1134.0 897.4 1125.0 892.8 1122.0 891.4 Z" fill="#b4c6db"/>
<path d="M1122.0 891.4 C1125.0 892.8 1134.0 897.4 1140.0 900.0 C1146.0 902.6 1153.3 905.4 1158.3 907.0 C1163.3 908.6 1161.4 908.5 1170.0 909.8 C1178.6 911.1 1196.7 913.7 1210.0 915.0 C1223.3 916.3 1236.8 916.9 1250.0 917.4 C1263.2 917.9 1282.8 917.9 1289.3 918.0 L1289.3 920.4 C1282.8 920.3 1263.2 920.3 1250.0 919.8 C1236.8 919.3 1223.3 918.7 1210.0 917.4 C1196.7 916.1 1178.6 913.5 1170.0 912.2 C1161.4 910.9 1163.3 911.0 1158.3 909.4 C1153.3 907.8 1146.0 905.0 1140.0 902.4 C1134.0 899.8 1125.0 895.2 1122.0 893.8 Z" fill="#c3d3e6"/>
<path d="M1076.2 828.2 L1123.9 891.8" fill="none" stroke-width="0.6"/>
<path d="M1079.0 802.5 L1120 827 L1240 880 L1289.3 910 L1289.3 912.6 C1282.4 912.1 1260.4 911.3 1248.0 909.9 C1235.6 908.5 1225.4 906.3 1215.0 904.0 C1204.6 901.7 1193.3 898.2 1185.8 896.0 C1178.3 893.8 1176.0 893.0 1170.0 890.5 C1164.0 888.0 1157.2 884.9 1150.0 881.0 C1142.8 877.1 1130.8 869.3 1127.0 867.0 Z" fill="#cdcdce"/>
<path d="M1110.5 845 L1135 851 L1200 886 L1289.3 908 L1289.3 912.6 C1282.4 912.1 1260.4 911.3 1248.0 909.9 C1235.6 908.5 1225.4 906.3 1215.0 904.0 C1204.6 901.7 1193.3 898.2 1185.8 896.0 C1178.3 893.8 1176.0 893.0 1170.0 890.5 C1164.0 888.0 1157.2 884.9 1150.0 881.0 C1142.8 877.1 1130.8 869.3 1127.0 867.0 Z" fill="#c3c6c9" stroke="none"/>
<path d="M1127.0 867.0 C1130.8 869.3 1142.8 877.1 1150.0 881.0 C1157.2 884.9 1164.0 888.0 1170.0 890.5 C1176.0 893.0 1178.3 893.8 1185.8 896.0 C1193.3 898.2 1204.6 901.7 1215.0 904.0 C1225.4 906.3 1235.6 908.5 1248.0 909.9 C1260.4 911.3 1282.4 912.1 1289.3 912.6 L1289.3 915 C1282.4 914.5 1260.4 913.7 1248.0 912.3 C1235.6 910.9 1225.4 908.7 1215.0 906.4 C1204.6 904.1 1193.3 900.6 1185.8 898.4 C1178.3 896.1 1176.0 895.4 1170.0 892.9 C1164.0 890.4 1157.2 887.3 1150.0 883.4 C1142.8 879.5 1130.8 871.7 1127.0 869.4 Z" fill="#d8d8d9"/>
<path d="M1080.9 803.3 L1128.9 867.6" fill="none" stroke-width="0.6"/>
<path d="M1091.5 785.0 C1094.6 788.1 1103.6 798.2 1110.0 803.5 C1116.4 808.8 1123.3 812.8 1130.0 816.5 C1136.7 820.2 1140.7 822.1 1150.0 825.5 C1159.3 828.9 1175.8 834.1 1185.8 836.7 C1195.8 839.3 1200.7 840.0 1210.0 841.3 C1219.3 842.6 1236.2 844.0 1241.5 844.6 L1289.3 906.4 C1283.9 906.0 1267.5 905.5 1256.7 903.8 C1245.9 902.1 1234.2 898.9 1224.2 896.0 C1214.2 893.1 1205.1 889.6 1197.0 886.3 C1188.9 883.0 1182.4 880.0 1175.4 876.0 C1168.4 872.0 1161.2 867.0 1155.0 862.5 C1148.8 858.0 1140.8 851.2 1138.0 849.0 Z" fill="#8d95a1"/>
<path d="M1091.5 785.0 C1094.6 788.1 1103.6 798.2 1110.0 803.5 C1116.4 808.8 1123.3 812.8 1130.0 816.5 C1136.7 820.2 1140.7 822.1 1150.0 825.5 C1159.3 828.9 1175.8 834.1 1185.8 836.7 C1195.8 839.3 1200.7 840.0 1210.0 841.3 C1219.3 842.6 1236.2 844.0 1241.5 844.6 L1244.5 848.5 C1241.2 849.8 1232.4 849.7 1225.0 849.0 C1217.6 848.3 1209.2 847.4 1200.0 846.0 C1190.8 844.6 1178.3 842.0 1170.0 840.5 C1161.7 839.0 1157.3 838.4 1150.0 837.0 C1142.7 835.6 1130.0 832.8 1126.0 832.0 Z" fill="#9aa1ab" stroke="none"/>
<path d="M1126.0 832.0 C1130.0 832.8 1142.7 835.6 1150.0 837.0 C1157.3 838.4 1161.7 839.0 1170.0 840.5 C1178.3 842.0 1190.8 844.6 1200.0 846.0 C1209.2 847.4 1217.6 848.3 1225.0 849.0 C1232.4 849.7 1241.2 849.8 1244.5 850.0" fill="none" stroke="#7c8296" stroke-width="0.5"/>
<path d="M1091.5 785.0 C1094.6 788.1 1103.6 798.2 1110.0 803.5 C1116.4 808.8 1123.3 812.8 1130.0 816.5 C1136.7 820.2 1140.7 822.1 1150.0 825.5 C1159.3 828.9 1175.8 834.1 1185.8 836.7 C1195.8 839.3 1200.7 840.0 1210.0 841.3 C1219.3 842.6 1236.2 844.0 1241.5 844.6 L1289.3 906.4" fill="none"/>
<path d="M1138.0 849.0 C1140.8 851.2 1148.8 858.0 1155.0 862.5 C1161.2 867.0 1168.4 872.0 1175.4 876.0 C1182.4 880.0 1188.9 883.0 1197.0 886.3 C1205.1 889.6 1214.2 893.1 1224.2 896.0 C1234.2 898.9 1245.9 902.1 1256.7 903.8 C1267.5 905.5 1283.9 906.0 1289.3 906.4 L1289.3 910 C1283.9 909.6 1267.5 909.1 1256.7 907.4 C1245.9 905.7 1234.2 902.5 1224.2 899.6 C1214.2 896.7 1205.1 893.2 1197.0 889.9 C1188.9 886.6 1182.4 883.6 1175.4 879.6 C1168.4 875.6 1161.2 870.6 1155.0 866.1 C1148.8 861.6 1140.8 854.9 1138.0 852.6 Z" fill="#9da4af"/>
<path d="M1093.4 785.9 L1140 849.8" fill="none" stroke-width="0.6"/>
<path d="M1243.5 846.5 L1287.8 906" fill="none" stroke="#7c8296" stroke-width="0.5"/>
</g>
</svg><!--FABRIC-END-->
</div>

<!-- BOTTOM BAR -->
<div id="bottom">
  <div class="btn" style="left:11px;top:12px"><svg class="abs" style="left:0;top:0" width="29" height="24" viewBox="0 0 29 24"><circle cx="15.4" cy="10.6" r="7.5" fill="#666"/><path d="M5.2 20.9 L9.2 14 L13.5 17.8 Z" fill="#666"/><text x="11.6" y="15.3" font-family="'Liberation Sans',sans-serif" font-weight="bold" font-size="12.5" fill="#fff">?</text></svg></div>
  <div class="btn" style="left:53px;top:12px"><svg class="abs" style="left:0;top:0" width="29" height="24" viewBox="0 0 29 24"><rect x="4.3" y="2.6" width="19.5" height="5.2" fill="#92e072" stroke="#7cc862" stroke-width="0.6"/><path d="M8.3 5.6 V7.6 M12 5.6 V7.6 M15.8 5.6 V7.6 M19.5 5.6 V7.6" stroke="#5aa84a" stroke-width="0.8"/><text x="3.4" y="17.8" font-family="'Liberation Sans',sans-serif" font-size="11.6" fill="#000">0,</text><text x="12.4" y="17.8" font-family="'Liberation Sans',sans-serif" font-size="11.6" fill="#4169e1">00</text><path d="M12.8 20 H24" stroke="#4169e1" stroke-width="1.4"/></svg></div>
  <div class="abs" style="left:95px;top:12px;width:24px;height:24px;background:#bc7072;border:1px solid #000"></div>
  <div class="btn" style="left:123px;top:12px"><svg class="abs" style="left:0;top:0" width="29" height="24" viewBox="0 0 29 24"><rect x="4.1" y="2.4" width="8.4" height="7.8" fill="#9a9a9a"/><rect x="4.7" y="3" width="3.4" height="3.2" fill="#f00"/><rect x="8.6" y="3" width="3.4" height="3.2" fill="#ff0"/><rect x="4.7" y="6.6" width="3.4" height="3.2" fill="#0e0"/><rect x="8.6" y="6.6" width="3.4" height="3.2" fill="#55f"/><text x="4.2" y="19" font-family="'Liberation Sans',sans-serif" font-weight="bold" font-size="11.5" fill="#000">A</text><path d="M4 19.2 h2.4 v2.2 h-2.4z M7.2 19.2 h2.4 v2.2 h-2.4z M10.6 19.2 h3 v2.2 h-3z" fill="#111"/><rect x="13.3" y="8.2" width="10.6" height="8.4" fill="#f4f4f4" stroke="#777" stroke-width="0.8"/><rect x="13.8" y="8.6" width="9.7" height="2.2" fill="#2a3aa0"/><rect x="13.9" y="8.7" width="1.8" height="1.8" fill="#ddd"/></svg></div>
  <div class="btn" style="left:165px;top:12px"><svg class="abs" style="left:0;top:0" width="29" height="24" viewBox="0 0 29 24"><rect x="4.2" y="3.5" width="19.3" height="14" rx="1" fill="none" stroke="#777" stroke-width="1"/><path d="M13.9 17.5 V21 M9 21.4 H18.8" stroke="#777" stroke-width="1.1"/><path d="M6 10 C8.5 7.5 11.5 5.3 14.3 4.7 C17 5.8 19.5 7.8 21.1 10 L19.8 10.6 C18.8 12.5 17.8 14.2 16.5 15.6 C15 13.4 12.6 11.4 9.6 10.6 Z" fill="#4b88d8" stroke="#5a7296" stroke-width="0.5"/><path d="M9.6 10.6 C11 8.6 12.6 6.6 14.3 4.7 M12.8 11.8 C14.5 10 16 8 17.6 6.6 M8.8 7.8 C12 8 16 9.8 18.6 12.4" stroke="#b6d0f2" stroke-width="0.7" fill="none"/><path d="M11.2 9.3 L14.2 10.2 L13.4 12.2 L10.6 10.9 Z" fill="#e6effa"/></svg></div>
  <div class="btn" style="left:207px;top:12px;background:#e6e6e6"><svg class="abs" style="left:0;top:0" width="29" height="24" viewBox="0 0 29 24"><text x="4" y="19.2" font-family="'Liberation Serif',serif" font-style="italic" font-size="17.5" fill="#555">f</text><text x="11" y="19.2" font-family="'Liberation Serif',serif" font-style="italic" font-size="17.5" fill="#555">x</text><ellipse cx="18" cy="6.2" rx="4.8" ry="3.2" fill="#f2f2f2" stroke="#555" stroke-width="0.8"/><circle cx="18" cy="6.4" r="1.6" fill="#777"/></svg></div>
  <svg class="abs" style="left:1584px;top:36px" width="16" height="15" viewBox="1584 1184 16 15"><g fill="#a3a3a3"><rect x="1594.2" y="1186.2" width="2.6" height="2.6"/><rect x="1590.2" y="1190.2" width="2.6" height="2.6"/><rect x="1594.2" y="1190.2" width="2.6" height="2.6"/><rect x="1587.2" y="1194.2" width="1.8" height="2.6"/><rect x="1590.2" y="1194.2" width="2.6" height="2.6"/><rect x="1594.2" y="1194.2" width="2.6" height="2.6"/></g></svg>
  <div class="pb" style="left:1261px;top:13px;border-color:#0067c0">OK</div>
  <div class="pb" style="left:1374px;top:13px">Cancel</div>
  <div class="pb" style="left:1487px;top:13px">Apply</div>
</div>
</div>
</body>
</html>
